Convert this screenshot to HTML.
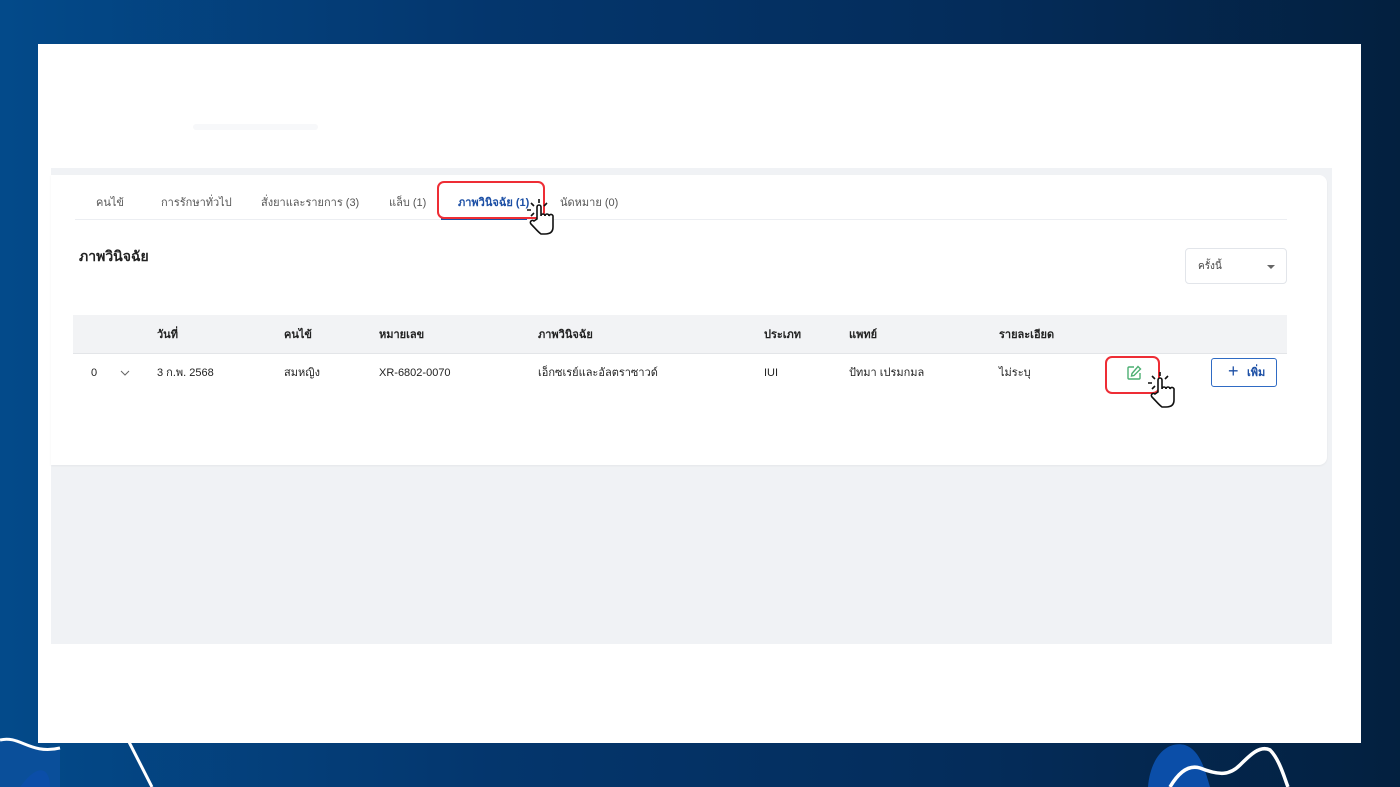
<!DOCTYPE html>
<html><head><meta charset="utf-8"><style>
*{margin:0;padding:0;box-sizing:border-box}
body{width:1400px;height:787px;overflow:hidden;position:relative;background:linear-gradient(90deg,#034a8a 0%,#04366d 35%,#042c5a 70%,#03203f 100%);font-family:"Liberation Sans","Noto Sans CJK SC",sans-serif;color:#222}
.panel{position:absolute;left:38px;top:44px;width:1323px;height:699px;background:#fff}
.gray{position:absolute;left:13px;top:124px;width:1281px;height:476px;background:#f0f2f5}
.card{position:absolute;left:13px;top:131px;width:1276px;height:290px;background:#fff;border-radius:0 8px 8px 0;box-shadow:0 1px 2px rgba(0,0,0,.05)}
.t{position:absolute;font-size:11px;white-space:nowrap;line-height:14px;height:14px;overflow:visible}
.tabline{position:absolute;left:24px;top:44px;width:1212px;height:1px;background:#eceef2}
.redbox{position:absolute;border:2px solid #ee2d35;border-radius:7px}
.thead{position:absolute;left:22px;top:140px;width:1214px;height:39px;background:#f2f3f5;border-bottom:1px solid #e3e5e8}
</style></head><body>
<svg style="position:absolute;left:0;top:700px" width="200" height="87"><path d="M0 40 C20 30 30 55 60 50 L60 87 L0 87Z" fill="#0a4f9a"/><path d="M0 40 C20 35 30 55 60 48" stroke="#fff" stroke-width="3" fill="none"/><path d="M20 87 C40 60 50 70 50 87Z" fill="#0b4ea8"/><path d="M128 40 L152 87" stroke="#fff" stroke-width="3"/></svg>
<svg style="position:absolute;left:1140px;top:740px" width="260" height="47"><path d="M8 47 C10 20 25 0 45 5 C60 10 65 30 70 47Z" fill="#0b4ea8"/><path d="M30 47 C40 30 50 25 60 28 C80 36 90 35 100 25 C110 15 120 5 130 10 C140 20 145 40 148 47" stroke="#fff" stroke-width="3.5" fill="none"/></svg>
<div class="panel">
 <div style="position:absolute;left:155px;top:80px;width:125px;height:6px;background:#f7f8fa;border-radius:3px"></div>
 <div class="gray"></div>
 <div class="card">
  <div class="t" style="left:45px;top:21px;color:#555">คนไข้</div>
  <div class="t" style="left:110px;top:21px;color:#555">การรักษาทั่วไป</div>
  <div class="t" style="left:210px;top:21px;color:#555">สั่งยาและรายการ (3)</div>
  <div class="t" style="left:338px;top:21px;color:#555">แล็บ (1)</div>
  <div class="t" style="left:407px;top:21px;color:#1c4fa5;font-weight:bold">ภาพวินิจฉัย (1)</div>
  <div class="t" style="left:509px;top:21px;color:#555">นัดหมาย (0)</div>
  <div class="tabline"></div>
  <div style="position:absolute;left:390px;top:43px;width:86px;height:2px;background:#1c4fa5"></div>
  <div class="redbox" style="left:386px;top:6px;width:108px;height:38px"></div>
  <div class="t" style="left:28px;top:74px;font-size:14px;font-weight:bold;color:#222">ภาพวินิจฉัย</div>
  <div style="position:absolute;left:1134px;top:73px;width:102px;height:36px;border:1px solid #e2e5ea;border-radius:4px"><span class="t" style="left:12px;top:11px;font-size:10px;color:#444">ครั้งนี้</span><span style="position:absolute;right:11px;top:16px;border:4px solid transparent;border-top:4px solid #666"></span></div>
  <div class="thead"></div>
  <div class="t" style="left:106px;top:153px;font-weight:bold">วันที่</div>
  <div class="t" style="left:233px;top:153px;font-weight:bold">คนไข้</div>
  <div class="t" style="left:328px;top:153px;font-weight:bold">หมายเลข</div>
  <div class="t" style="left:487px;top:153px;font-weight:bold">ภาพวินิจฉัย</div>
  <div class="t" style="left:713px;top:153px;font-weight:bold">ประเภท</div>
  <div class="t" style="left:798px;top:153px;font-weight:bold">แพทย์</div>
  <div class="t" style="left:948px;top:153px;font-weight:bold">รายละเอียด</div>
  <div class="t" style="left:40px;top:191px">0</div>
  <svg style="position:absolute;left:69px;top:195px" width="10" height="7"><path d="M1 1 L5 5 L9 1" stroke="#666" fill="none"/></svg>
  <div class="t" style="left:106px;top:191px">3 ก.พ. 2568</div>
  <div class="t" style="left:233px;top:191px">สมหญิง</div>
  <div class="t" style="left:328px;top:191px">XR-6802-0070</div>
  <div class="t" style="left:487px;top:191px">เอ็กซเรย์และอัลตราซาวด์</div>
  <div class="t" style="left:713px;top:191px">IUI</div>
  <div class="t" style="left:798px;top:191px">ปัทมา เปรมกมล</div>
  <div class="t" style="left:948px;top:191px">ไม่ระบุ</div>
  <div class="redbox" style="left:1054px;top:181px;width:55px;height:38px"></div>
  <svg style="position:absolute;left:1075px;top:190px" width="16" height="16" viewBox="0 0 16 16"><path d="M8 2 H3 a1 1 0 0 0 -1 1 V13 a1 1 0 0 0 1 1 H13 a1 1 0 0 0 1 -1 V8" stroke="#4caf72" stroke-width="1.4" fill="none"/><path d="M12 1.5 L14.5 4 L8 10.5 L5.5 11 L6 8.5Z" stroke="#4caf72" stroke-width="1.4" fill="none"/></svg>
  <div style="position:absolute;left:1160px;top:183px;width:66px;height:29px;border:1px solid #2f6bc4;border-radius:3px;color:#1c4fa5"><span class="t" style="left:16px;top:5px;font-size:18px">+</span><span class="t" style="left:35px;top:7px;font-size:11px;font-weight:bold">เพิ่ม</span></div>
  <svg style="position:absolute;left:472px;top:22px" width="40" height="42" viewBox="0 0 40 42"><g stroke="#111" stroke-width="1.6" fill="#fff"><path d="M14 22 L14 10 a2 2 0 0 1 4 0 L18 19 a2 2 0 0 1 4 0 a2 2 0 0 1 4 0 a2 2 0 0 1 4 1 L30 30 C30 35 27 37 22 37 L18 37 C15 35 11 30 8 27 a2 2 0 0 1 3 -3Z"/></g><g stroke="#111" stroke-width="1.6"><path d="M16 2 V6 M8 6 L11 9 M24 6 L21 9 M4 13 H8 M8 19 L11 16"/></g></svg>
  <svg style="position:absolute;left:1093px;top:195px" width="40" height="42" viewBox="0 0 40 42"><g stroke="#111" stroke-width="1.6" fill="#fff"><path d="M14 22 L14 10 a2 2 0 0 1 4 0 L18 19 a2 2 0 0 1 4 0 a2 2 0 0 1 4 0 a2 2 0 0 1 4 1 L30 30 C30 35 27 37 22 37 L18 37 C15 35 11 30 8 27 a2 2 0 0 1 3 -3Z"/></g><g stroke="#111" stroke-width="1.6"><path d="M16 2 V6 M8 6 L11 9 M24 6 L21 9 M4 13 H8 M8 19 L11 16"/></g></svg>
 </div>
</div>
</body></html>
